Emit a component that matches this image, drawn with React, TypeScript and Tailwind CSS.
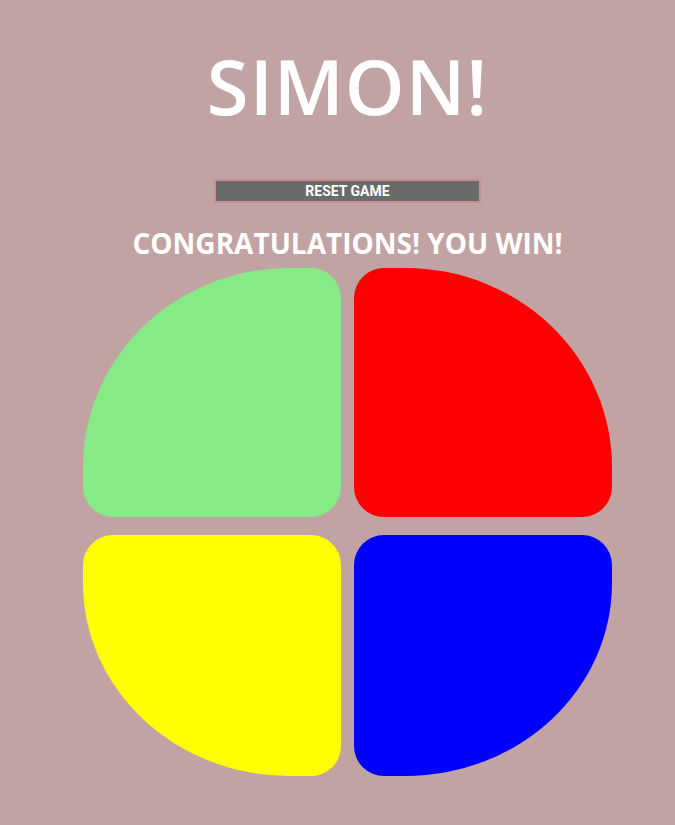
import React from "react";

export default function App() {
  return (
    <div className="min-h-[825px] w-full bg-[#c2a3a3] pl-5 flex flex-col items-center" style={{ fontFamily: '"Open Sans", sans-serif' }}>
      <h1 className="mt-[41px] text-[76px] leading-[89px] font-semibold text-white tracking-[1px]" style={{ fontFamily: '"Open Sans", sans-serif' }}>
        SIMON!
      </h1>
      <button className="mt-[49px] w-[267px] h-[24px] bg-[#6b6b6b] border-2 border-[#c98e8e] text-white text-[14px] font-bold leading-none flex items-center justify-center" style={{ fontFamily: 'Roboto, sans-serif' }}>
        RESET GAME
      </button>
      <h2 className="mt-[23px] text-[28px] leading-[35px] font-bold text-white" style={{ fontFamily: '"Open Sans", sans-serif' }}>
        CONGRATULATIONS! YOU WIN!
      </h2>
      <div className="mt-[7px] grid grid-cols-[258px_258px] grid-rows-[249px_241px] gap-x-[13px] gap-y-[18px]">
        <div className="bg-[#86ea86] rounded-tl-[80%] rounded-tr-[30px] rounded-br-[30px] rounded-bl-[30px]" />
        <div className="bg-[#ff0000] rounded-tr-[80%] rounded-tl-[30px] rounded-br-[30px] rounded-bl-[30px]" />
        <div className="bg-[#ffff00] rounded-bl-[80%] rounded-tl-[30px] rounded-tr-[30px] rounded-br-[30px]" />
        <div className="bg-[#0000ff] rounded-br-[80%] rounded-tl-[30px] rounded-tr-[30px] rounded-bl-[30px]" />
      </div>
    </div>
  );
}
